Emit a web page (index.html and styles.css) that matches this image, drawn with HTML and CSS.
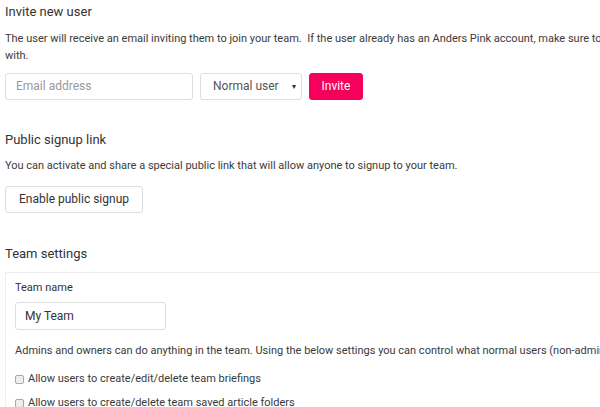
FILE: index.html
```html
<!DOCTYPE html>
<html>
<head>
<meta charset="utf-8">
<link rel="stylesheet" href="styles.css">
</head>
<body>
<div class="page">
  <section class="section">
    <h3 class="heading">Invite new user</h3>
    <p class="text">The user will receive an email inviting them to join your team. &nbsp;If the user already has an Anders Pink account, make sure to use the email address they signed up with.</p>
    <div class="invite-row">
      <div class="input email">Email address</div>
      <div class="input select"><span>Normal user</span><span class="caret">▾</span></div>
      <div class="btn btn-pink">Invite</div>
    </div>
  </section>
  <section class="section">
    <h3 class="heading">Public signup link</h3>
    <p class="text">You can activate and share a special public link that will allow anyone to signup to your team.</p>
    <div class="btn btn-default">Enable public signup</div>
  </section>
  <section class="section">
    <h3 class="heading">Team settings</h3>
    <div class="panel">
      <div class="label">Team name</div>
      <div class="input team">My Team</div>
      <p class="text">Admins and owners can do anything in the team. Using the below settings you can control what normal users (non-admins) can do.</p>
      <label class="check"><span class="box"></span>Allow users to create/edit/delete team briefings</label>
      <label class="check"><span class="box"></span>Allow users to create/delete team saved article folders</label>
    </div>
  </section>
</div>
</body>
</html>
```

FILE: styles.css
```css
html, body {
  margin: 0;
  padding: 0;
  background: #fff;
  overflow: hidden;
}
body {
  font-family: Roboto, "Liberation Sans", Arial, sans-serif;
  color: #333;
}
.page {
  width: 795px;
  padding: 4px 5px 0;
}
.heading {
  font-size: 13px;
  font-weight: 400;
  margin: 0;
  line-height: 16px;
  color: #333;
}
.text {
  font-size: 11px;
  line-height: 17px;
  margin: 9.5px 0 0;
  color: #3a3a3a;
}
.invite-row {
  display: flex;
  gap: 7px;
  margin-top: 9.5px;
}
.input {
  box-sizing: border-box;
  height: 27px;
  border: 1px solid #ddd;
  border-radius: 3px;
  font-size: 12px;
  line-height: 25px;
  padding: 0 10px;
  background: #fff;
}
.email {
  width: 188px;
  color: #999;
}
.select {
  width: 102px;
  display: flex;
  justify-content: space-between;
  color: #555;
  padding: 0 5px 0 12px;
}
.caret {
  font-size: 8px;
  color: #333;
}
.btn {
  box-sizing: border-box;
  height: 27px;
  border-radius: 3px;
  font-size: 12px;
  line-height: 25px;
  padding: 0 13px;
  display: inline-block;
}
.btn-pink {
  background: #f5005a;
  border: 1px solid #f5005a;
  color: #fff;
  padding: 0 11.5px;
}
.btn-default {
  border: 1px solid #ddd;
  color: #333;
  margin-top: 12.5px;
  padding: 0 13px;
}
.section + .section {
  margin-top: 32px;
}
.section + .section .heading + .text {
  margin-top: 8.5px;
}
.section:last-child {
  margin-top: 33px;
}
.panel {
  margin-top: 10px;
  border: 1px solid #eee;
  border-right: none;
  padding: 8px 9px 10px;
}
.label {
  font-size: 11px;
  line-height: 14px;
}
.input.team {
  width: 151px;
  margin-top: 7px;
  color: #333;
  height: 28px;
  line-height: 26px;
  padding: 0 9px;
}
.panel .text {
  margin-top: 11.5px;
}
.check {
  display: flex;
  align-items: center;
  font-size: 11px;
  line-height: 16px;
  margin-top: 8px;
  color: #3a3a3a;
}
.text + .check {
  margin-top: 12.5px;
}
.box {
  box-sizing: border-box;
  width: 9px;
  height: 9px;
  border: 1px solid #a8a8a8;
  border-radius: 2px;
  background: #eee;
  margin-right: 4px;
}
```
